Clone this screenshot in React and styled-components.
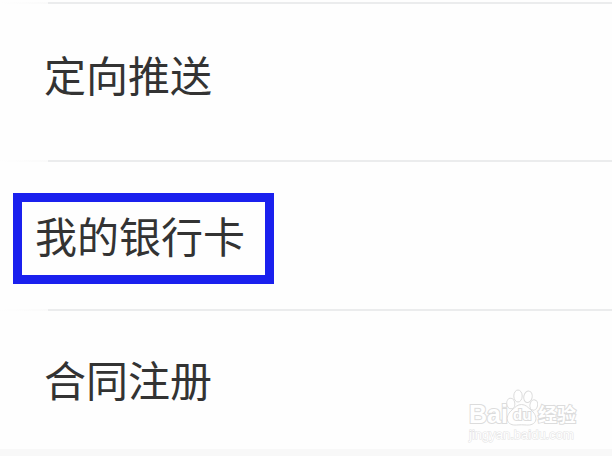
import React from 'react';
import styled, { createGlobalStyle } from 'styled-components';

const items = [
  { id: 'push', label: '定向推送', height: 156, lift: 16 },
  { id: 'cards', label: '我的银行卡', height: 147, marked: true },
  { id: 'contract', label: '合同注册', height: 138, lift: 2 },
];

const App = () => {
  return (
    <Page>
      <GlobalStyle />
      <Menu>
        {items.map(item => (
          <Item key={item.id}>
            <Row href={`#${item.id}`} $height={item.height}>
              {item.marked
                ? <Marked>{item.label}</Marked>
                : <Label $lift={item.lift}>{item.label}</Label>}
            </Row>
          </Item>
        ))}
      </Menu>
      <Watermark>
        <Brand>
          <Latin>Bai</Latin>
          <Paw />
          <Chinese>经验</Chinese>
        </Brand>
        <Site>jingyan.baidu.com</Site>
      </Watermark>
    </Page>
  );
};

const Paw = () => (
  <PawBox>
    <PawShape width="32" height="38" viewBox="0 0 32 38">
      <ellipse cx="4.8" cy="15.5" rx="4" ry="5.3" transform="rotate(-8 4.8 15.5)" />
      <ellipse cx="12" cy="8" rx="4.2" ry="6" />
      <ellipse cx="22" cy="8.8" rx="4.2" ry="5.8" transform="rotate(12 22 8.8)" />
      <ellipse cx="27.8" cy="17" rx="3.8" ry="5.2" transform="rotate(12 27.8 17)" />
      <path d="M15.5 16.5 C19.5 16.5 21.5 19 25 22 C28 24.5 30.5 28 29.8 32 C29 36 24.5 37.4 20.5 37 C17 36.7 14 36.7 10.5 37 C6.5 37.4 2.2 36 1.4 32 C.7 28 3 24.5 6 22 C9.5 19 11.5 16.5 15.5 16.5 Z" />
    </PawShape>
    <PawText>du</PawText>
  </PawBox>
);

export default App;


const GlobalStyle = createGlobalStyle`
  body {
    margin: 0;
    background: #f8f8f8;
    overflow: hidden;
  }
`;

const Page = styled.main`
  position: relative;
  font-family: "Noto Sans CJK SC", sans-serif;
  color: #333;
`;

const Menu = styled.ul`
  margin: 0;
  padding: 2px 0 0;
  list-style: none;
  background: #fefefe;
`;

// the divider is nearly invisible until it reaches the text column
const Item = styled.li`
  &::before {
    content: '';
    display: block;
    height: 2px;
    background: linear-gradient(to right, #fefefe, #fafafa 48px, #ebeced 48px);
  }
`;

const Row = styled.a`
  display: flex;
  align-items: center;
  height: ${props => props.$height}px;
  color: inherit;
  font-size: 42px;
  line-height: 60px;
  text-decoration: none;
`;

const Label = styled.span`
  padding: 0 44px ${props => props.$lift}px;
`;

const Marked = styled.span`
  margin: 6px 0 0 13px;
  padding: 3px 20px 10px 13px;
  border: 9px solid #1a20ee;
`;

const Watermark = styled.div`
  position: absolute;
  right: 33px;
  bottom: 5px;
  width: 110px;
  color: #fff;
`;

const Brand = styled.div`
  display: flex;
  align-items: flex-end;
  -webkit-text-stroke: 2px #dcdcdc;
  paint-order: stroke fill;
`;

const Latin = styled.span`
  width: 37px;
  font: bold 25px/24px "Liberation Sans", Arial, sans-serif;
`;

const PawBox = styled.span`
  position: relative;
  display: flex;
  width: 32px;
`;

const PawShape = styled.svg`
  fill: #fff;
  stroke: #dcdcdc;
  stroke-width: 1px;
  paint-order: normal;
`;

const PawText = styled.span`
  position: absolute;
  left: 7px;
  bottom: 2px;
  font: bold 15px/18px "Liberation Sans", Arial, sans-serif;
`;

const Chinese = styled.span`
  font-size: 19px;
  font-weight: bold;
  line-height: 24px;
`;

const Site = styled.div`
  font: 13px/18px "Liberation Sans", Arial, sans-serif;
  -webkit-text-stroke: 1px #e2e2e2;
  paint-order: stroke fill;
`;
